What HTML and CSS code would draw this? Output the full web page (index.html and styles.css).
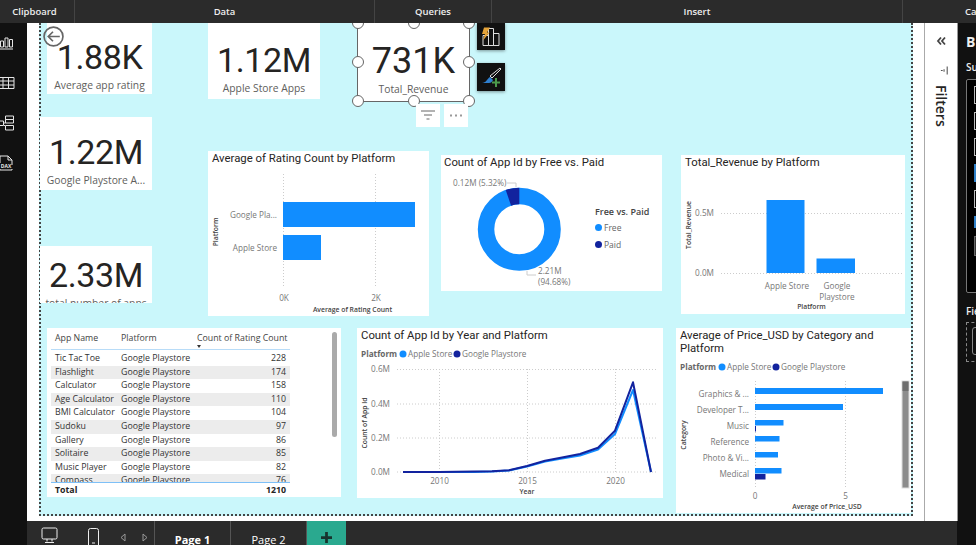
FILE: index.html
```html
<!DOCTYPE html>
<html lang="en">

<head>
    <meta charset="utf-8">
    <title>Power BI report</title>
    <link rel="stylesheet" href="styles.css">
</head>

<body>
    <div class="app">
        <header class="ribbon">
            <div class="group group-clip">Clipboard</div>
            <div class="group group-data">Data</div>
            <div class="group group-queries">Queries</div>
            <div class="group group-insert">Insert</div>
            <div class="group group-rest">Calculations</div>
        </header>

        <nav class="rail">
            <svg class="rail-icon" viewBox="0 0 16 16">
                <path d="M1 14h13M1.500 12V6h3v6zM6 12V3h3v9zM10.500 12V4.500h3V12z" />
            </svg>
            <svg class="rail-icon" viewBox="0 0 16 16">
                <path d="M-1 2.500h16v11H-1zM-1 6h16M-1 10h16M4 2.500v11M9.500 2.500v11" />
            </svg>
            <svg class="rail-icon" viewBox="0 0 16 16">
                <path d="M6.500 1h8v3.500h-8zM6.500 4.500h8V8h-8zM6.500 10.500h8V15h-8zM0 6h4.500v4.500H0zM4.500 8h2M4.500 9.500l2 2" />
            </svg>
            <svg class="rail-icon" viewBox="0 0 16 16">
                <path d="M1 8V1h8l4 4v5M9 1v4h4M1 14v1h12v-1" />
                <text class="dax" x="7" y="13">DAX</text>
            </svg>
        </nav>

        <main class="work">
            <div class="canvas">
                <section class="card card-rating">
                    <div class="big">1.88K</div>
                    <div class="cap">Average app rating</div>
                </section>
                <section class="card card-apple">
                    <div class="big">1.12M</div>
                    <div class="cap">Apple Store Apps</div>
                </section>
                <section class="card card-google">
                    <div class="big">1.22M</div>
                    <div class="cap">Google Playstore A...</div>
                </section>
                <section class="card card-total">
                    <div class="big">2.33M</div>
                    <div class="cap">total number of apps</div>
                </section>
                <section class="card card-revenue">
                    <div class="big">731K</div>
                    <div class="cap">Total_Revenue</div>
                    <i class="handle h-tl"></i><i class="handle h-tc"></i><i class="handle h-tr"></i>
                    <i class="handle h-ml"></i><i class="handle h-mr"></i>
                    <i class="handle h-bl"></i><i class="handle h-bc"></i><i class="handle h-br"></i>
                </section>

                <svg class="back" viewBox="0 0 20 20">
                    <circle cx="10" cy="10" r="9" />
                    <path d="M16 10H5M9.500 5.500 5 10l4.500 4.500" />
                </svg>

                <button class="tool tool-a">
                    <svg viewBox="0 0 28 27">
                        <path class="tool-line" d="M6 22V12h5.500v10zM11.500 22V5h5v17zM16.500 22V10H22v12z" />
                        <path class="bolt" d="M7 4h6l-3 5h2.500L6 17l2-6.500H5z" />
                    </svg>
                </button>
                <button class="tool tool-b">
                    <svg viewBox="0 0 28 28">
                        <path class="tool-line" d="M23 5 13 13l2 2 9-9z" />
                        <path class="brush" d="M5 20c4 0 5-4 8-6l3 3c-1 2-2 3-4 3z" />
                        <path class="plus" d="M19 15v9M15 19.500h8" />
                    </svg>
                </button>
                <div class="mini mini-filter">
                    <svg viewBox="0 0 24 23">
                        <path d="M5 7h14M8 11h8M10.500 15h3" />
                    </svg>
                </div>
                <div class="mini mini-more">
                    <svg viewBox="0 0 24 23">
                        <path d="M6 11.500h2M11 11.500h2M16 11.500h2" />
                    </svg>
                </div>

                <!-- charts use page coordinates in their viewBox -->
                <section class="viz viz-rating">
                    <svg viewBox="208 151 221 165">
                        <text class="title" x="212" y="162">Average of Rating Count by Platform</text>
                        <path class="grid" d="M283.500 174v114M375.500 174v114" />
                        <rect class="s1" x="283" y="202" width="132" height="25" />
                        <rect class="s1" x="283" y="235" width="38" height="25" />
                        <text class="tick end" x="277" y="218">Google Pla...</text>
                        <text class="tick end" x="277" y="251">Apple Store</text>
                        <text class="tick mid" x="284" y="301">0K</text>
                        <text class="tick mid" x="376" y="301">2K</text>
                        <text class="axis mid" x="352.500" y="312">Average of Rating Count</text>
                        <text class="axis mid" transform="translate(218 232) rotate(-90)">Platform</text>
                    </svg>
                </section>

                <section class="viz viz-donut">
                    <svg viewBox="441 155 221 136">
                        <text class="title" x="444" y="166">Count of App Id by Free vs. Paid</text>
                        <circle class="ring" cx="519.300" cy="229.300" r="33.250" />
                        <circle class="ring-paid" cx="519.300" cy="229.300" r="33.250" pathLength="100" />
                        <path class="lead" d="M507 183h9v4M527 271v4h9" />
                        <text class="tick" x="453" y="186">0.12M (5.32%)</text>
                        <text class="tick" x="538" y="274">2.21M</text>
                        <text class="tick" x="538" y="285">(94.68%)</text>
                        <text class="legend-head" x="595" y="215">Free vs. Paid</text>
                        <circle class="s1" cx="598.500" cy="227.500" r="3.500" />
                        <text class="legend" x="604" y="231">Free</text>
                        <circle class="s2" cx="598.500" cy="244.500" r="3.500" />
                        <text class="legend" x="604" y="248">Paid</text>
                    </svg>
                </section>

                <section class="viz viz-revenue">
                    <svg viewBox="681 155 224 159">
                        <text class="title" x="685" y="166">Total_Revenue by Platform</text>
                        <path class="grid" d="M721 213.500h181M721 273.500h181" />
                        <rect class="s1" x="766.500" y="200" width="38" height="73" />
                        <rect class="s1" x="816.500" y="258.500" width="38.500" height="14.500" />
                        <text class="tick end" x="714" y="216">0.5M</text>
                        <text class="tick end" x="714" y="276">0.0M</text>
                        <text class="tick mid" x="787" y="289">Apple Store</text>
                        <text class="tick mid" x="837" y="289">Google</text>
                        <text class="tick mid" x="837" y="300">Playstore</text>
                        <text class="axis mid" x="811.500" y="309">Platform</text>
                        <text class="axis mid" transform="translate(691 225) rotate(-90)">Total_Revenue</text>
                    </svg>
                </section>

                <section class="viz viz-table">
                    <div class="tbl">
                        <div class="row head">
                            <span>App Name</span><span>Platform</span><span class="sorted">Count of Rating Count</span>
                        </div>
                        <div class="rows">
                            <div class="row"><span>Tic Tac Toe</span><span>Google Playstore</span><span class="num">228</span></div>
                            <div class="row"><span>Flashlight</span><span>Google Playstore</span><span class="num">174</span></div>
                            <div class="row"><span>Calculator</span><span>Google Playstore</span><span class="num">158</span></div>
                            <div class="row"><span>Age Calculator</span><span>Google Playstore</span><span class="num">110</span></div>
                            <div class="row"><span>BMI Calculator</span><span>Google Playstore</span><span class="num">104</span></div>
                            <div class="row"><span>Sudoku</span><span>Google Playstore</span><span class="num">97</span></div>
                            <div class="row"><span>Gallery</span><span>Google Playstore</span><span class="num">86</span></div>
                            <div class="row"><span>Solitaire</span><span>Google Playstore</span><span class="num">85</span></div>
                            <div class="row"><span>Music Player</span><span>Google Playstore</span><span class="num">82</span></div>
                            <div class="row"><span>Compass</span><span>Google Playstore</span><span class="num">76</span></div>
                        </div>
                        <div class="row foot"><span>Total</span><span></span><span class="num">1210</span></div>
                    </div>
                    <div class="tbl-scroll"></div>
                </section>

                <section class="viz viz-line">
                    <svg viewBox="357 328 306 170">
                        <text class="title" x="361" y="339">Count of App Id by Year and Platform</text>
                        <text class="legend-head small" x="361" y="357">Platform</text>
                        <circle class="s1" cx="403" cy="354" r="3.500" />
                        <text class="tick" x="408" y="357">Apple Store</text>
                        <circle class="s2" cx="457" cy="354" r="3.500" />
                        <text class="tick" x="462" y="357">Google Playstore</text>
                        <path class="grid" d="M397 369.500h260M397 404h260M397 438h260M397 472h260M439.500 369v103M527.500 369v103M615.500 369v103" />
                        <polyline class="line-a" points="403,472 421,472 439,472 456,472 474,472 492,471.500 509,470.500 527,466.500 545,461.500 562,458.500 580,455.500 598,449.500 615,434 633,390 651,472" />
                        <polyline class="line-b" points="403,472 421,472 439,472 456,471.800 474,471.500 492,471.200 509,470.300 527,466 545,460.700 562,457.500 580,454 598,447.700 615,430.700 633,382.300 651,472" />
                        <text class="tick end" x="390" y="372">0.6M</text>
                        <text class="tick end" x="390" y="407">0.4M</text>
                        <text class="tick end" x="390" y="441">0.2M</text>
                        <text class="tick end" x="390" y="475">0.0M</text>
                        <text class="tick mid" x="439.500" y="484">2010</text>
                        <text class="tick mid" x="527.500" y="484">2015</text>
                        <text class="tick mid" x="615.500" y="484">2020</text>
                        <text class="axis mid" x="527" y="494">Year</text>
                        <text class="axis mid" transform="translate(367 423) rotate(-90)">Count of App Id</text>
                    </svg>
                </section>

                <section class="viz viz-price">
                    <svg viewBox="676 328 235 185">
                        <text class="title" x="680" y="339">Average of Price_USD by Category and</text>
                        <text class="title" x="680" y="352">Platform</text>
                        <text class="legend-head small" x="680" y="370">Platform</text>
                        <circle class="s1" cx="722" cy="367" r="3.500" />
                        <text class="tick" x="727" y="370">Apple Store</text>
                        <circle class="s2" cx="776" cy="367" r="3.500" />
                        <text class="tick" x="781" y="370">Google Playstore</text>
                        <path class="grid" d="M755.500 381v107M845.500 381v107" />
                        <rect class="s1" x="755" y="388" width="128" height="6" />
                        <rect class="s1" x="755" y="404" width="88" height="6" />
                        <rect class="s1" x="755" y="420" width="28.500" height="5.500" />
                        <rect class="s2" x="755" y="426" width="1" height="5.500" />
                        <rect class="s1" x="755" y="436" width="24.500" height="5.500" />
                        <rect class="s1" x="755" y="452" width="23" height="5.500" />
                        <rect class="s1" x="755" y="468" width="26.500" height="5.500" />
                        <rect class="s2" x="755" y="474" width="10.500" height="5.500" />
                        <text class="tick end" x="749" y="397">Graphics &amp; ...</text>
                        <text class="tick end" x="749" y="413">Developer T...</text>
                        <text class="tick end" x="749" y="429">Music</text>
                        <text class="tick end" x="749" y="445">Reference</text>
                        <text class="tick end" x="749" y="461">Photo &amp; Vi...</text>
                        <text class="tick end" x="749" y="477">Medical</text>
                        <text class="tick mid" x="755" y="499">0</text>
                        <text class="tick mid" x="845.500" y="499">5</text>
                        <text class="axis mid" x="827" y="509">Average of Price_USD</text>
                        <text class="axis mid" transform="translate(686 435) rotate(-90)">Category</text>
                        <rect class="bar-track" x="902" y="381" width="7" height="107" />
                        <rect class="bar-thumb" x="902.500" y="381.500" width="6" height="9.500" />
                    </svg>
                </section>
            </div>
        </main>

        <aside class="filters">
            <svg class="collapse" viewBox="0 0 10 10">
                <path d="M5 1.500 2 5l3 3.500M9 1.500 6 5l3 3.500" />
            </svg>
            <svg class="signal" viewBox="0 0 10 10">
                <path d="M1 5h2M4.500 3.500v3M8 .500v9" />
            </svg>
            <div class="filters-label">Filters</div>
        </aside>

        <aside class="pane">
            <div class="pane-head">Build visual</div>
            <div class="pane-sub">Suggest</div>
            <div class="gallery">
                <i class="g"></i><i class="g"></i><i class="g"></i>
                <i class="g g-on"></i><i class="g"></i><i class="g g-on2"></i><i class="g g-last"></i>
            </div>
            <div class="pane-sub fields">Fields</div>
            <div class="well"><div class="well-in"></div></div>
        </aside>

        <footer class="pages">
            <div class="views">
                <svg class="view-desk" viewBox="0 0 17 17">
                    <path d="M2.500 1h12a1.500 1.500 0 0 1 1.500 1.500v8a1.500 1.500 0 0 1-1.500 1.500h-12A1.500 1.500 0 0 1 1 10.500v-8A1.500 1.500 0 0 1 2.500 1zM6 12v2.500M11 12v2.500M4 15.500h9" />
                </svg>
                <svg class="view-phone" viewBox="0 0 11 18">
                    <path d="M2.500 .500h6a2 2 0 0 1 2 2v15h-10v-15a2 2 0 0 1 2-2zM4 15h3" />
                </svg>
                <svg class="arrow arrow-l" viewBox="0 0 6 9">
                    <path d="M5 1 1 4.500 5 8z" />
                </svg>
                <svg class="arrow arrow-r" viewBox="0 0 6 9">
                    <path d="M1 1l4 3.500L1 8z" />
                </svg>
            </div>
            <div class="tab tab-on">Page 1</div>
            <div class="tab">Page 2</div>
            <div class="tab-add"><svg viewBox="0 0 12 12"><path d="M6 0v12M0 6h12" /></svg></div>
        </footer>
    </div>
</body>

</html>
```

FILE: styles.css
```css
* {
    box-sizing: border-box;
}

body {
    margin: 0;
    width: 976px;
    height: 545px;
    overflow: hidden;
    font-family: "Open Sans", "Liberation Sans", sans-serif;
    background: #111;
}

.app {
    display: grid;
    grid-template-columns: 27px 898px 33px 18px;
    grid-template-rows: 23px 498px 24px;
    height: 545px;
}

/* ribbon */
.ribbon {
    position: relative;
    z-index: 2;
    grid-column: 1 / 5;
    display: flex;
    background: #2b2b2b;
    color: #eee;
    font-size: 9.500px;
    font-weight: 600;
    white-space: nowrap;
    overflow: hidden;
}

.group {
    display: flex;
    flex: none;
    align-items: center;
    justify-content: center;
    border-right: 1px solid #444;
}

.group-clip { width: 75px; padding-right: 5px; }
.group-data { width: 300px; }
.group-queries { width: 117px; }
.group-insert { width: 411px; }
.group-rest { justify-content: flex-start; padding-left: 62px; border: 0; }

/* left rail */
.rail {
    grid-row: 2 / 4;
    display: flex;
    flex-direction: column;
    gap: 24px;
    padding-top: 12px;
    background: #111;
    overflow: hidden;
}

.rail-icon {
    flex: none;
    width: 16px;
    height: 16px;
    overflow: visible;
    margin-left: -1px;
}

.rail-icon path {
    fill: none;
    stroke: #e6e6e6;
    stroke-width: 1;
}

.dax {
    font-size: 5px;
    font-weight: 700;
    fill: #e6e6e6;
    text-anchor: middle;
}

/* report area */
.work {
    background: #fff;
    border-right: 1px solid #aaa;
    padding-right: 11px;
    padding-left: 12px;
    height: 498px;
}

.canvas {
    position: relative;
    height: 493px;
    background: #caf7fb;
    border-left: 2px dotted #444;
    border-right: 2px dotted #444;
    border-bottom: 2px dotted #444;
}

.card,
.viz {
    position: absolute;
    background: #fff;
}

.card {
    display: flex;
    flex-direction: column;
    align-items: center;
    color: #252423;
}

.big {
    font-family: "Roboto", "Liberation Sans", sans-serif;
    font-size: 34px;
    line-height: 42px;
    letter-spacing: -.4px;
}

.cap {
    font-size: 10.300px;
    line-height: 14px;
    color: #605e5c;
    white-space: nowrap;
}

.card-rating { left: 6px; top: 0; width: 105px; height: 71px; padding-top: 13px; }
.card-apple { left: 167px; top: 0; width: 112px; height: 76px; padding-top: 16px; }
.card-google { left: -1px; top: 94px; width: 112px; height: 73px; padding-top: 14px; }
.card-total { left: -1px; top: 223px; width: 112px; height: 57px; padding-top: 8px; overflow: hidden; }
.card-revenue { left: 316px; top: -1px; width: 113px; height: 80px; padding-top: 17px; border: 1px solid #666; }
.card-revenue .big { font-size: 36px; letter-spacing: 0; }

.handle {
    position: absolute;
    width: 12px;
    height: 12px;
    background: #fff;
    border: 1px solid #666;
    border-radius: 50%;
}

.h-tl { left: -6px; top: -6px; }
.h-tc { left: 50px; top: -6px; }
.h-tr { right: -6px; top: -6px; }
.h-ml { left: -6px; top: 33px; }
.h-mr { right: -6px; top: 33px; }
.h-bl { left: -6px; bottom: -6px; }
.h-bc { left: 50px; bottom: -6px; }
.h-br { right: -6px; bottom: -6px; }

.back {
    position: absolute;
    left: 2px;
    top: 3px;
    width: 21px;
    height: 21px;
    fill: none;
    stroke: #666;
    stroke-width: 1.600;
}

.tool {
    position: absolute;
    left: 436px;
    width: 28px;
    height: 28px;
    padding: 0;
    border: 0;
    background: #111;
    box-shadow: 0 1px 3px #0006;
}

.tool svg {
    display: block;
    width: 28px;
    height: 28px;
}

.tool-a { top: 0; height: 27px; }
.tool-b { top: 40px; }

.tool-line {
    fill: none;
    stroke: #ddd;
    stroke-width: 1;
}

.bolt { fill: #e5a43a; }
.brush { fill: #2f80d0; }

.plus {
    fill: none;
    stroke: #4c9a4c;
    stroke-width: 2;
}

.mini {
    position: absolute;
    top: 81px;
    width: 24px;
    height: 23px;
    background: #fff;
}

.mini svg {
    display: block;
    fill: none;
    stroke: #666;
    stroke-width: 1;
}

.mini-more svg {
    stroke: #999;
    stroke-width: 2;
}

.mini-filter { left: 375px; }
.mini-more { left: 403px; }

.viz svg {
    display: block;
    width: 100%;
    height: 100%;
}

.viz-rating { left: 167px; top: 128px; width: 221px; height: 165px; }
.viz-donut { left: 400px; top: 132px; width: 221px; height: 136px; }
.viz-revenue { left: 640px; top: 132px; width: 224px; height: 159px; }
.viz-table { left: 6px; top: 305px; width: 294px; height: 169px; }
.viz-line { left: 316px; top: 305px; width: 306px; height: 170px; }
.viz-price { left: 635px; top: 305px; width: 235px; height: 185px; }

/* chart text */
text {
    font-family: "Open Sans", "Liberation Sans", sans-serif;
}

.title {
    font-family: "Roboto", "Liberation Sans", sans-serif;
    font-size: 11.350px;
    fill: #252423;
}

.tick {
    font-size: 8.200px;
    fill: #777;
}

.axis {
    font-size: 6.800px;
    font-weight: 600;
    fill: #444;
}

.legend-head {
    font-size: 9px;
    font-weight: 600;
    fill: #444;
}

.legend-head.small {
    font-size: 8.200px;
    font-weight: 700;
    fill: #666;
}

.legend {
    font-size: 8.500px;
    fill: #666;
}

.end { text-anchor: end; }
.mid { text-anchor: middle; }

.grid {
    fill: none;
    stroke: #ccc;
    stroke-width: 1;
    stroke-dasharray: 1 2;
}

.lead {
    fill: none;
    stroke: #ccc;
    stroke-width: 1;
}

.s1 { fill: #118dff; }
.s2 { fill: #12239e; }

.ring {
    fill: none;
    stroke: #118dff;
    stroke-width: 16.500;
}

.ring-paid {
    fill: none;
    stroke: #12239e;
    stroke-width: 16.500;
    stroke-dasharray: 5.320 94.680;
    stroke-dashoffset: 5.320;
    transform: rotate(-90deg);
    transform-origin: 519.300px 229.300px;
}

.line-a,
.line-b {
    fill: none;
    stroke-width: 2;
    stroke-linejoin: round;
}

.line-a { stroke: #118dff; }
.line-b { stroke: #12239e; }

.bar-track { fill: #8c8c8c; stroke: #ddd; }
.bar-thumb { fill: #6e6e6e; }

/* table */
.tbl {
    display: flex;
    flex-direction: column;
    margin-left: 4px;
    width: 239px;
    height: 169px;
    font-size: 8.800px;
    color: #333;
}

.row {
    display: grid;
    flex: none;
    grid-template-columns: 66px 76px 97px;
    height: 13.600px;
    line-height: 13.600px;
    white-space: nowrap;
}

.row span {
    padding-left: 4px;
    overflow: hidden;
}

.row .num {
    padding-right: 4px;
    text-align: right;
}

.head {
    position: relative;
    height: 22px;
    line-height: 21px;
    color: #444;
    border-bottom: 1px solid #b8dcf8;
}

.sorted::after {
    content: "";
    position: absolute;
    left: 146px;
    top: 17px;
    border: 2.500px solid transparent;
    border-top: 3px solid #333;
}

.rows {
    flex: none;
    height: 133px;
    overflow: hidden;
    padding-top: 2px;
    border-bottom: 1px solid #7ec0f7;
}

.rows .row:nth-child(even) {
    background: #ececec;
}

.foot {
    height: 14px;
    line-height: 14px;
    font-weight: 700;
    color: #252423;
}

.tbl-scroll {
    position: absolute;
    left: 285px;
    top: 4px;
    width: 5px;
    height: 105px;
    background: #aaa;
    border-radius: 3px;
}

/* filter pane */
.filters {
    position: relative;
    grid-row: 2 / 3;
    grid-column: 3;
    background: #fff;
    border-right: 1px solid #999;
}

.collapse {
    position: absolute;
    left: 11px;
    top: 13px;
    width: 10px;
    height: 10px;
    fill: none;
    stroke: #444;
    stroke-width: 1.800;
}

.signal {
    position: absolute;
    left: 15px;
    top: 43px;
    width: 9px;
    height: 9px;
    fill: none;
    stroke: #555;
    stroke-width: 1.200;
}

.filters-label {
    position: absolute;
    left: 7px;
    top: 62px;
    writing-mode: vertical-rl;
    font-size: 14px;
    line-height: 18px;
    font-weight: 600;
    color: #252423;
}

/* right pane */
.pane {
    grid-row: 2 / 4;
    grid-column: 4;
    background: #111;
    color: #eee;
    padding: 11px 0 0 8px;
    white-space: nowrap;
    overflow: hidden;
}

.pane-head {
    font-size: 14px;
    font-weight: 700;
    line-height: 16px;
}

.pane-sub {
    margin-top: 10px;
    font-size: 10px;
    line-height: 14px;
    font-weight: 600;
}

.gallery {
    display: flex;
    flex-direction: column;
    gap: 8px;
    width: 30px;
    height: 214px;
    margin-top: 5px;
    padding: 6px 0 0 7px;
    background: #000;
    border: 1px solid #777;
    border-radius: 2px;
}

.g {
    display: block;
    flex: none;
    width: 17px;
    height: 18px;
    border: 1px solid #bbb;
}

.g-on { background: #2f80c8; border-color: #2f80c8; }
.g-on2 { background: #2f80c8; border-color: #2f80c8; height: 12px; }
.g-last { height: 20px; background: #333; border-color: #666; }

.pane-sub.fields {
    margin-top: 11px;
}

.well {
    width: 30px;
    height: 40px;
    margin-top: 4px;
    padding: 4px 0 0 5px;
    border: 1px dashed #888;
}

.well-in {
    width: 30px;
    height: 28px;
    border: 1px solid #888;
    border-radius: 3px;
}

/* page tabs */
.pages {
    grid-column: 2 / 4;
    grid-row: 3;
    display: flex;
    background: #2b2b2b;
    color: #fff;
    font-size: 11px;
    overflow: hidden;
    margin-right: 1px;
}

.views {
    position: relative;
    flex: none;
    width: 128px;
    border-right: 1px solid #555;
}

.views svg {
    position: absolute;
    fill: none;
}

.view-desk { left: 14px; top: 6px; width: 17px; height: 17px; stroke: #eee; stroke-width: 1; }
.view-phone { left: 61px; top: 7px; width: 11px; height: 18px; stroke: #eee; stroke-width: 1; }
.arrow { width: 6px; height: 9px; top: 12px; stroke: #999; stroke-width: 1; }
.arrow-l { left: 93px; }
.arrow-r { left: 115px; }

.tab {
    display: flex;
    flex: none;
    justify-content: center;
    width: 76px;
    padding-top: 11px;
    line-height: 16px;
    font-weight: 500;
    border-right: 1px solid #555;
}

.tab-on {
    font-weight: 700;
}

.tab-add {
    display: flex;
    flex: none;
    justify-content: center;
    width: 39px;
    padding-top: 11px;
    background: #2aa98f;
}

.tab-add svg {
    display: block;
    width: 11px;
    height: 11px;
    fill: none;
    stroke: #17332d;
    stroke-width: 3;
}
```
